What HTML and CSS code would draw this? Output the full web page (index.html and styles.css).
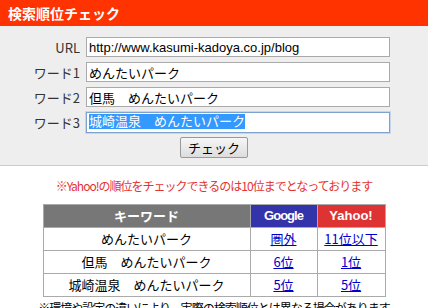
FILE: index.html
```html
<!DOCTYPE html>
<html>

<head>
  <meta charset="UTF-8">
  <title>検索順位チェック</title>
  <link rel="stylesheet" href="styles.css">
</head>

<body>
  <h1>検索順位チェック</h1>
  <form class="check-form">
    <div class="row">
      <label for="url">URL</label>
      <input type="text" id="url" value="http://www.kasumi-kadoya.co.jp/blog">
    </div>
    <div class="row">
      <label for="word1">ワード1</label>
      <input type="text" id="word1" value="めんたいパーク">
    </div>
    <div class="row">
      <label for="word2">ワード2</label>
      <input type="text" id="word2" value="但馬　めんたいパーク">
    </div>
    <div class="row">
      <label for="word3">ワード3</label>
      <div class="field focused" id="word3"><span class="sel">城崎温泉　めんたいパーク</span></div>
    </div>
    <div class="actions">
      <button type="button" class="submit">チェック</button>
    </div>
  </form>

  <p class="notice">※Yahoo!の順位をチェックできるのは10位までとなっております</p>

  <table class="result">
    <tr>
      <th class="kw">キーワード</th>
      <th class="google">Google</th>
      <th class="yahoo">Yahoo!</th>
    </tr>
    <tr>
      <td>めんたいパーク</td>
      <td><a href="#">圏外</a></td>
      <td><a href="#">11位以下</a></td>
    </tr>
    <tr>
      <td>但馬　めんたいパーク</td>
      <td><a href="#">6位</a></td>
      <td><a href="#">1位</a></td>
    </tr>
    <tr>
      <td>城崎温泉　めんたいパーク</td>
      <td><a href="#">5位</a></td>
      <td><a href="#">5位</a></td>
    </tr>
  </table>

  <p class="footnote">※環境や設定の違いにより、実際の検索順位とは異なる場合があります</p>
</body>

</html>
```

FILE: styles.css
```css
body {
  margin: 0;
  font-family: "Noto Sans CJK JP", "Liberation Sans", sans-serif;
  font-size: 13px;
  color: #000000;
  background: #ffffff;
}

h1 {
  margin: 0;
  height: 26px;
  padding-left: 8px;
  line-height: 26px;
  font-size: 14px;
  font-weight: 700;
  color: #ffffff;
  background: #ff3300;
}

.check-form {
  margin: 0;
  padding: 11px 0 7px;
  background: #eeeeee;
  border-bottom: 1px solid #cccccc;
}

.row {
  display: flex;
  align-items: center;
  height: 20px;
  margin-bottom: 5px;
}

.row label {
  width: 80px;
  padding-right: 6px;
  text-align: right;
  font-size: 13px;
  color: #333333;
}

.row input,
.field {
  box-sizing: border-box;
  width: 304px;
  height: 20px;
  margin: 0;
  padding: 0 2px;
  border: 1px solid #aaaaaa;
  background: #ffffff;
  font-family: "Liberation Sans", "Noto Sans CJK JP", sans-serif;
  font-size: 13px;
  line-height: 18px;
  color: #000000;
}

.field.focused {
  height: 21px;
  border-color: #7da2ce;
  box-shadow: 0 0 0 1px #c5d7ee;
}

.sel {
  background: #3399ff;
  color: #ffffff;
}

.actions {
  display: flex;
  justify-content: center;
}

.submit {
  height: 21px;
  padding: 0 7px;
  border: 1px solid #999999;
  border-radius: 2px;
  background: linear-gradient(#f6f6f6, #dddddd);
  font-family: "Noto Sans CJK JP", sans-serif;
  font-size: 13px;
  line-height: 19px;
  color: #000000;
}

.notice {
  margin: 11px 0 10px;
  text-align: center;
  font-size: 12px;
  letter-spacing: -1px;
  color: #e53333;
}

.result {
  width: 343px;
  margin: 0 auto;
  border-collapse: collapse;
  border: 1px solid #aaaaaa;
}

.result th,
.result td {
  height: 22px;
  padding: 0;
  border: 1px solid #aaaaaa;
  text-align: center;
  font-size: 13px;
  line-height: 20px;
}

.result th {
  color: #ffffff;
  font-weight: 700;
}

.result th.kw {
  width: 206px;
  background: #777777;
}

.result th.google {
  width: 66px;
  font-family: "Liberation Sans", sans-serif;
  letter-spacing: -1px;
  background: #3333aa;
}

.result th.yahoo {
  font-family: "Liberation Sans", sans-serif;
  background: #dd3333;
}

.result a {
  color: #0000cc;
  text-decoration: underline;
}

.footnote {
  margin: 2px 0 0;
  text-align: center;
  font-size: 12px;
  letter-spacing: -1px;
}
```
